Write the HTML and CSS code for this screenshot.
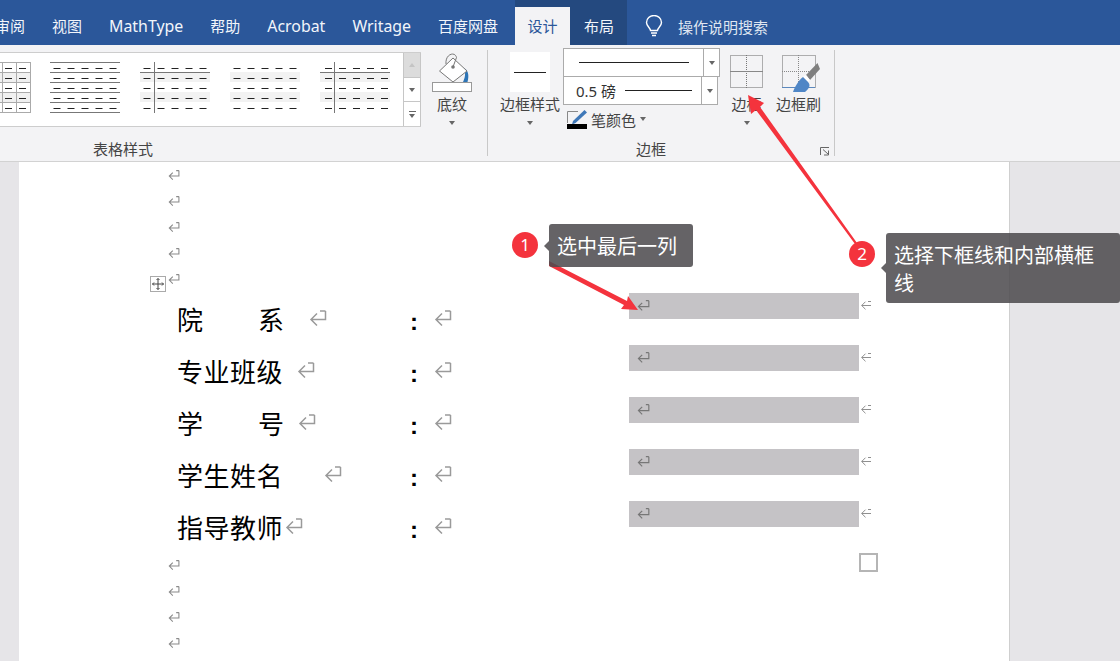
FILE: index.html
```html
<!DOCTYPE html>
<html lang="zh-CN">
<head>
<meta charset="utf-8">
<title>设计</title>
<link rel="stylesheet" href="styles.css">
</head>
<body>
<svg class="defs" width="0" height="0">
  <defs>
    <symbol id="ret" viewBox="0 0 11 10"><path d="M10 .5V5.500H1.200M4.400 2.300 1.200 5.500 4.400 8.700M7.500 .5H10" fill="none" stroke="currentColor" stroke-width="1"/></symbol>
    <symbol id="tail" viewBox="0 0 11 12"><path d="M10.500 6.500H1.200M5 2.700 1.200 6.500 5 10.300M7.500 2.500H10.500" fill="none" stroke="currentColor" stroke-width="1"/></symbol>
    <symbol id="retbig" viewBox="0 0 18 16"><path d="M16.500 1V9.500H2M8 3.500 2 9.500 8 15.500M11 1H16.500" fill="none" stroke="currentColor" stroke-width="1.500"/></symbol>
    <g id="dashrow"><path d="M0 .5H7M14 .5H21M28 .5H35M42 .5H49M56 .5H63" stroke="#222" stroke-width="1"/></g>
    <g id="dashes"><use href="#dashrow" y="0"/><use href="#dashrow" y="10"/><use href="#dashrow" y="20"/><use href="#dashrow" y="30"/><use href="#dashrow" y="40"/></g>
    <g id="shade"><rect x="0" y="10" width="70" height="10" fill="#f2f2f2"/><rect x="0" y="30" width="70" height="10" fill="#f2f2f2"/></g>
  </defs>
</svg>
<div class="app">
  <nav class="tabs">
    <span class="tab tab-first">审阅</span>
    <span class="tab">视图</span>
    <span class="tab tab-latin">MathType</span>
    <span class="tab">帮助</span>
    <span class="tab tab-latin">Acrobat</span>
    <span class="tab tab-latin">Writage</span>
    <span class="tab">百度网盘</span>
    <div class="context">
      <span class="tab tab-active">设计</span>
      <span class="tab tab-layout">布局</span>
    </div>
    <div class="search">
      <svg class="bulb" width="18" height="22" viewBox="0 0 18 22"><path d="M5.500 15.500C5 12.500 1.500 11 1.500 7.500a7.500 7 0 0 1 15 0C16.500 11 13 12.500 12.500 15.500ZM6 18H12M7 20.500H11" fill="none" stroke="#fff" stroke-width="1.400"/></svg>
      <span>操作说明搜索</span>
    </div>
  </nav>

  <section class="ribbon">
    <div class="group group-styles">
      <div class="group-body">
        <div class="gallery">
          <svg class="gallery-art" width="403" height="73" viewBox="0 0 403 73">
            <g transform="translate(0,9)">
              <rect x="0" y="10" width="31" height="10" fill="#f0f0f0"/><rect x="0" y="30" width="31" height="10" fill="#f0f0f0"/>
              <path d="M0 .5H31M0 10.500H31M0 20.500H31M0 30.500H31M0 40.500H31M0 50.500H31M2.500 0V51M16.500 0V51M30.500 0V51" stroke="#aaa" fill="none"/>
              <path d="M5 6.500H12M19 6.500H26M5 16.500H12M19 16.500H26M5 26.500H12M19 26.500H26M5 36.500H12M19 36.500H26M5 46.500H12M19 46.500H26" stroke="#222"/>
            </g>
            <g transform="translate(50,9)">
              <path d="M0 .5H70M0 10.500H70M0 20.500H70M0 30.500H70M0 40.500H70M0 50.500H70" stroke="#777"/>
              <use href="#dashes" x="3.500" y="6"/>
            </g>
            <g transform="translate(140,9)">
              <use href="#shade"/>
              <path d="M0 10.500H70M14.500 0V51" stroke="#777"/>
              <use href="#dashes" x="3.500" y="6"/>
            </g>
            <g transform="translate(230,9)">
              <use href="#shade"/>
              <use href="#dashes" x="3.500" y="6"/>
            </g>
            <g transform="translate(320,9)">
              <use href="#shade"/>
              <path d="M0 10.500H70M14.500 0V51" stroke="#777"/>
              <use href="#dashes" x="5" y="6"/>
            </g>
          </svg>
          <div class="gallery-scroll">
            <span class="scroll-btn scroll-up"><i class="caret caret-up"></i></span>
            <span class="scroll-btn"><i class="caret"></i></span>
            <span class="scroll-btn scroll-more"><i class="more-bar"></i><i class="caret"></i></span>
          </div>
        </div>
        <div class="tool tool-shade">
          <svg class="icon icon-bucket" width="40" height="39" viewBox="0 0 40 39">
            <path d="M32 15C36 17 37.500 22 35.500 29H31C33 25 34 20 32 15Z" fill="#2e75b6"/>
            <path d="M21 5 7.500 18 21 29 35 18Z" fill="#fff" stroke="#777" stroke-width="1"/>
            <path d="M14 11C13 1 23 -2 24.500 4.500L21 14" fill="none" stroke="#777" stroke-width="1"/>
            <circle cx="21" cy="14" r="1.800" fill="#777"/>
            <rect x=".5" y="29.500" width="39" height="9" fill="#fff" stroke="#999"/>
          </svg>
          <span class="tool-label">底纹</span>
          <i class="caret caret-tool"></i>
        </div>
      </div>
      <div class="group-label label-styles">表格样式</div>
    </div>
    <div class="sep"></div>

    <div class="group group-borders">
      <div class="group-body body-borders">
        <div class="tool tool-style">
          <span class="style-swatch"><i class="swatch-line"></i></span>
          <span class="tool-label">边框样式</span>
          <i class="caret caret-tool"></i>
        </div>
        <div class="combos">
          <div class="combo combo-a">
            <span class="combo-main"><i class="line line-a"></i></span>
            <span class="combo-arrow"><i class="caret"></i></span>
          </div>
          <div class="combo combo-b">
            <span class="combo-main"><span class="weight">0.5 磅</span><i class="line line-b"></i></span>
            <span class="combo-arrow"><i class="caret"></i></span>
          </div>
          <div class="pen">
            <svg width="20" height="19" viewBox="0 0 20 19">
              <path d="M.5 13V1.500H11" fill="none" stroke="#888" stroke-width="1"/>
              <path d="M17.500 0 20 2.500 8.500 13 5 14.500 6 11Z" fill="#3f78b8"/>
              <rect x="0" y="14" width="20" height="5" fill="#000"/>
            </svg>
            <span class="pen-label">笔颜色</span>
            <i class="caret"></i>
          </div>
        </div>
        <div class="tool tool-border">
          <svg class="icon icon-grid" width="33" height="33" viewBox="0 0 33 33">
            <rect x=".5" y=".5" width="32" height="32" fill="none" stroke="#666" stroke-dasharray="1 1"/>
            <path d="M16.500 0V33" stroke="#777" stroke-dasharray="1 1"/>
            <path d="M0 16.500H33" stroke="#888"/>
          </svg>
          <span class="tool-label">边框</span>
          <i class="caret caret-tool"></i>
        </div>
        <div class="tool tool-brush">
          <svg class="icon icon-brush" width="38" height="37" viewBox="0 0 38 37">
            <rect x=".5" y=".5" width="33" height="32" fill="none" stroke="#666" stroke-dasharray="1 1"/>
            <path d="M16.500 0V33M0 16.500H33" stroke="#888" stroke-dasharray="1 1"/>
            <path d="M0 32.500H33" stroke="#5b88bd"/>
            <path d="M38 14 35.500 8 24 20 28 25Z" fill="#7f7f7f"/>
            <path d="M24 20 28 25 26 27 21 22Z" fill="#fff"/>
            <path d="M21 22C17 25 13 31 11 37H23C27 34 29 30 26 27Z" fill="#4f86c6"/>
          </svg>
          <span class="tool-label">边框刷</span>
        </div>
      </div>
      <div class="group-label label-borders">
        <span class="label-text">边框</span>
        <svg class="launcher" width="10" height="9" viewBox="0 0 10 9"><path d="M.5 8V.5H9M3 2.500 8 7M8.500 3.500V8H4" fill="none" stroke="#666"/></svg>
      </div>
    </div>
    <div class="sep"></div>
  </section>

  <main class="workspace">
    <div class="page">
      <div class="para"><svg class="ret"><use href="#ret"/></svg></div>
      <div class="para"><svg class="ret"><use href="#ret"/></svg></div>
      <div class="para"><svg class="ret"><use href="#ret"/></svg></div>
      <div class="para"><svg class="ret"><use href="#ret"/></svg></div>
      <div class="para"><svg class="ret"><use href="#ret"/></svg></div>

      <div class="table">
        <svg class="move-handle" width="16" height="16" viewBox="0 0 16 16">
          <rect x=".5" y=".5" width="15" height="15" fill="#fff" stroke="#aaa"/>
          <path d="M8 2.500V13.500M2.500 8H13.500M6.500 4 8 2.500 9.500 4M6.500 12 8 13.500 9.500 12M4 6.500 2.500 8 4 9.500M12 6.500 13.500 8 12 9.500" fill="none" stroke="#444"/>
        </svg>

        <div class="cell-label"><span class="name name-spread"><span>院</span><span>系</span></span><svg class="retbig gap-25"><use href="#retbig"/></svg></div>
        <div class="cell-colon"><b class="colon">:</b><svg class="retbig"><use href="#retbig"/></svg></div>
        <div class="cell-sel"><span class="selected"><svg class="ret ret-sel"><use href="#ret"/></svg></span></div>
        <div class="cell-end"><svg class="ret tail"><use href="#tail"/></svg></div>

        <div class="cell-label"><span class="name">专业班级</span><svg class="retbig gap-13"><use href="#retbig"/></svg></div>
        <div class="cell-colon"><b class="colon">:</b><svg class="retbig"><use href="#retbig"/></svg></div>
        <div class="cell-sel"><span class="selected"><svg class="ret ret-sel"><use href="#ret"/></svg></span></div>
        <div class="cell-end"><svg class="ret tail"><use href="#tail"/></svg></div>

        <div class="cell-label"><span class="name name-spread"><span>学</span><span>号</span></span><svg class="retbig gap-14"><use href="#retbig"/></svg></div>
        <div class="cell-colon"><b class="colon">:</b><svg class="retbig"><use href="#retbig"/></svg></div>
        <div class="cell-sel"><span class="selected"><svg class="ret ret-sel"><use href="#ret"/></svg></span></div>
        <div class="cell-end"><svg class="ret tail"><use href="#tail"/></svg></div>

        <div class="cell-label"><span class="name">学生姓名</span><svg class="retbig gap-40"><use href="#retbig"/></svg></div>
        <div class="cell-colon"><b class="colon">:</b><svg class="retbig"><use href="#retbig"/></svg></div>
        <div class="cell-sel"><span class="selected"><svg class="ret ret-sel"><use href="#ret"/></svg></span></div>
        <div class="cell-end"><svg class="ret tail"><use href="#tail"/></svg></div>

        <div class="cell-label"><span class="name">指导教师</span><svg class="retbig gap-1"><use href="#retbig"/></svg></div>
        <div class="cell-colon"><b class="colon">:</b><svg class="retbig"><use href="#retbig"/></svg></div>
        <div class="cell-sel"><span class="selected"><svg class="ret ret-sel"><use href="#ret"/></svg></span></div>
        <div class="cell-end"><svg class="ret tail"><use href="#tail"/></svg></div>

        <span class="resize-handle"></span>
      </div>

      <div class="para"><svg class="ret"><use href="#ret"/></svg></div>
      <div class="para"><svg class="ret"><use href="#ret"/></svg></div>
      <div class="para"><svg class="ret"><use href="#ret"/></svg></div>
      <div class="para"><svg class="ret"><use href="#ret"/></svg></div>
    </div>
  </main>

  <svg class="arrows" width="1120" height="661" viewBox="0 0 1120 661">
    <path d="M549 261 627 301 628 296 638 310 621 309 624 305 549 266Z" fill="#f4333d"/>
    <path d="M748 95 764 103 760 107 857 243 855 244 756 110 751 114Z" fill="#f4333d"/>
  </svg>
  <span class="badge badge-one">1</span>
  <div class="note note-one">选中最后一列</div>
  <span class="badge badge-two">2</span>
  <div class="note note-two">选择下框线和内部横框线</div>
</div>
</body>
</html>
```
FILE: styles.css
```css
* { box-sizing: border-box; }
html, body { margin: 0; height: 100%; overflow: hidden; }
body { font-family: "Noto Sans", "Noto Sans CJK SC", sans-serif; color: #333; }
i { display: block; }
.defs { position: absolute; }

.app { position: relative; width: 1120px; height: 661px; display: flex; flex-direction: column; overflow: hidden; background: #e6e5e8; }

/* title tabs */
.tabs { flex: none; height: 45px; display: flex; background: #2b579a; color: #f2f5fa; font-size: 15px; overflow: hidden; }
.tab { flex: none; padding: 7px 13.5px 0; line-height: 38px; white-space: nowrap; }
.tab-first { margin-left: -18.5px; }
.tab-latin { font-size: 15.9px; }
.context { display: flex; flex: none; margin-left: 3.5px; width: 112px; background: #24497f; }
.tab-active { padding: 0 12.5px; margin-top: 7px; background: #f3f3f5; color: #2b579a; line-height: 38px; }
.tab-layout { padding: 7px 14px 0; }
.search { display: flex; align-items: center; margin-left: 18px; padding-top: 7px; color: #dfe6f1; font-size: 15px; }
.bulb { margin-right: 15px; margin-top: -1px; }

/* ribbon */
.ribbon { flex: none; height: 117px; display: flex; background: #f3f3f5; border-bottom: 1px solid #d2d2d2; color: #444; font-size: 15px; }
.group { display: flex; flex-direction: column; height: 100%; }
.group-styles { width: 487px; }
.group-borders { width: 346px; }
.group-body { height: 93px; display: flex; }
.group-label { height: 23px; line-height: 22px; text-align: center; }
.label-styles { width: 246px; }
.label-borders { position: relative; padding-right: 20px; }
.launcher { position: absolute; right: 4px; top: 9px; }
.sep { flex: none; width: 1px; height: 106px; margin-top: 5px; background: #c8c8c8; }

.gallery { flex: none; margin-top: 7px; width: 421px; height: 75px; display: flex; background: #fff; border: solid #cdcdcd; border-width: 1px 0 1px 0; }
.gallery-art { flex: none; display: block; }
.gallery-scroll { flex: none; width: 18px; display: flex; flex-direction: column; border: 1px solid #c6c6c6; border-width: 0 1px 0 1px; }
.scroll-btn { flex: 1; display: flex; flex-direction: column; align-items: center; justify-content: center; gap: 2px; border-bottom: 1px solid #c6c6c6; }
.scroll-btn:last-child { border-bottom: 0; }
.scroll-up { background: #dcdcdc; }
.more-bar { width: 7px; height: 1px; background: #666; }

.caret { width: 0; height: 0; border: 3.5px solid transparent; border-top: 4px solid #666; border-bottom: 0; }
.caret-up { border-top: 0; border-bottom: 4px solid #c4c4c4; }
.caret-tool { margin-top: 7px; }

.tool { flex: none; display: flex; flex-direction: column; align-items: center; }
.tool-label { display: block; height: 20px; line-height: 20px; white-space: nowrap; }
.tool-shade { width: 40px; margin-left: 11px; }
.icon { display: block; flex: none; }
.icon-bucket { margin-top: 8px; margin-bottom: 2px; }

.body-borders { padding-left: 12px; }
.tool-style { width: 60px; }
.style-swatch { display: flex; align-items: center; justify-content: center; width: 40px; height: 40px; margin-top: 7px; margin-bottom: 2px; background: #fff; }
.swatch-line { width: 32px; height: 1px; background: #222; }

.combos { flex: none; width: 157px; margin-left: 3px; margin-top: 3px; }
.combo { display: flex; height: 29px; background: #fff; border: 1px solid #ababab; }
.combo-a { width: 157px; }
.combo-b { width: 155px; margin-top: -1px; }
.combo-main { flex: 1; display: flex; align-items: center; padding-left: 15px; }
.combo-arrow { flex: none; width: 16px; display: flex; align-items: center; justify-content: center; border-left: 1px solid #ababab; }
.line { height: 1px; background: #222; }
.line-a { width: 110px; }
.line-b { width: 67px; margin-left: 9px; }
.combo-b .combo-main { padding-left: 12px; }
.weight { color: #333; font-size: 15px; white-space: nowrap; }
.pen { display: flex; align-items: center; height: 26px; padding-left: 4px; padding-top: 2px; }
.pen svg { margin-right: 4px; }
.pen-label { margin-right: 4px; }

.tool-border { width: 33px; margin-left: 10px; }
.icon-grid { margin-top: 10px; margin-bottom: 6px; }
.tool-brush { width: 45px; margin-left: 13px; }
.icon-brush { margin: 10px 0 2px 6px; align-self: flex-start; }

/* document */
.workspace { flex: 1; min-height: 0; padding-left: 19px; }
.page { width: 991px; height: 100%; padding-left: 149px; background: #fff; border-right: 1px solid #cfcfcf; color: #000; font-family: "Noto Sans CJK SC", sans-serif; }
.para { height: 26px; display: flex; align-items: center; }
.ret { display: block; flex: none; width: 12px; height: 11px; color: #8a8a8a; }
.retbig { display: block; flex: none; width: 18px; height: 16px; color: #9a9a9a; }

.table { position: relative; display: grid; grid-template-columns: 242px 219px 230px 30px; grid-auto-rows: 52px; width: 721px; }
.cell-label { display: flex; align-items: center; padding-left: 9px; }
.name { font-size: 26px; line-height: 52px; width: 107px; white-space: nowrap; padding-top: 1px; letter-spacing: .5px; }
.name-spread { display: flex; justify-content: space-between; letter-spacing: 0; }
.gap-1 { margin-left: 1px; }
.gap-13 { margin-left: 13px; }
.gap-14 { margin-left: 14px; }
.gap-25 { margin-left: 25px; }
.gap-40 { margin-left: 40px; }
.cell-colon { display: flex; align-items: center; }
.colon { width: 24px; font: bold 24px/52px "Liberation Sans", sans-serif; padding-top: 8px; }
.cell-sel { padding-top: 1px; }
.selected { display: block; height: 26px; padding: 7px 0 0 8px; background: #c5c3c6; }
.ret-sel { width: 13px; height: 12px; color: #777; }
.cell-end { padding: 7px 0 0 1px; }
.tail { height: 12px; color: #8f8f8f; }
.move-handle { position: absolute; left: -18px; top: -16px; }
.resize-handle { position: absolute; left: 691px; top: 261px; width: 19px; height: 19px; background: #fff; border: 2px solid #b5b5b5; }

/* annotations */
.arrows { position: absolute; left: 0; top: 0; pointer-events: none; }
.badge { position: absolute; width: 26px; height: 26px; border-radius: 50%; background: #f4333d; color: #fff; font: 17px/26px "Noto Sans", sans-serif; text-align: center; }
.badge-one { left: 512px; top: 232px; }
.badge-two { left: 849px; top: 241px; }
.note { position: absolute; padding: 8px; font: 20px/28px "Noto Sans CJK SC", sans-serif; color: #fff; background: rgba(78, 76, 79, .87); border-radius: 3px; }
.note::before { content: ""; position: absolute; left: -5px; top: 50%; margin-top: -5px; border: 5px solid transparent; border-left: 0; border-right-color: rgba(78, 76, 79, .87); }
.note-one { left: 549px; top: 224px; width: 144px; height: 43px; }
.note-two { left: 886px; top: 233px; width: 234px; height: 70px; }
```
